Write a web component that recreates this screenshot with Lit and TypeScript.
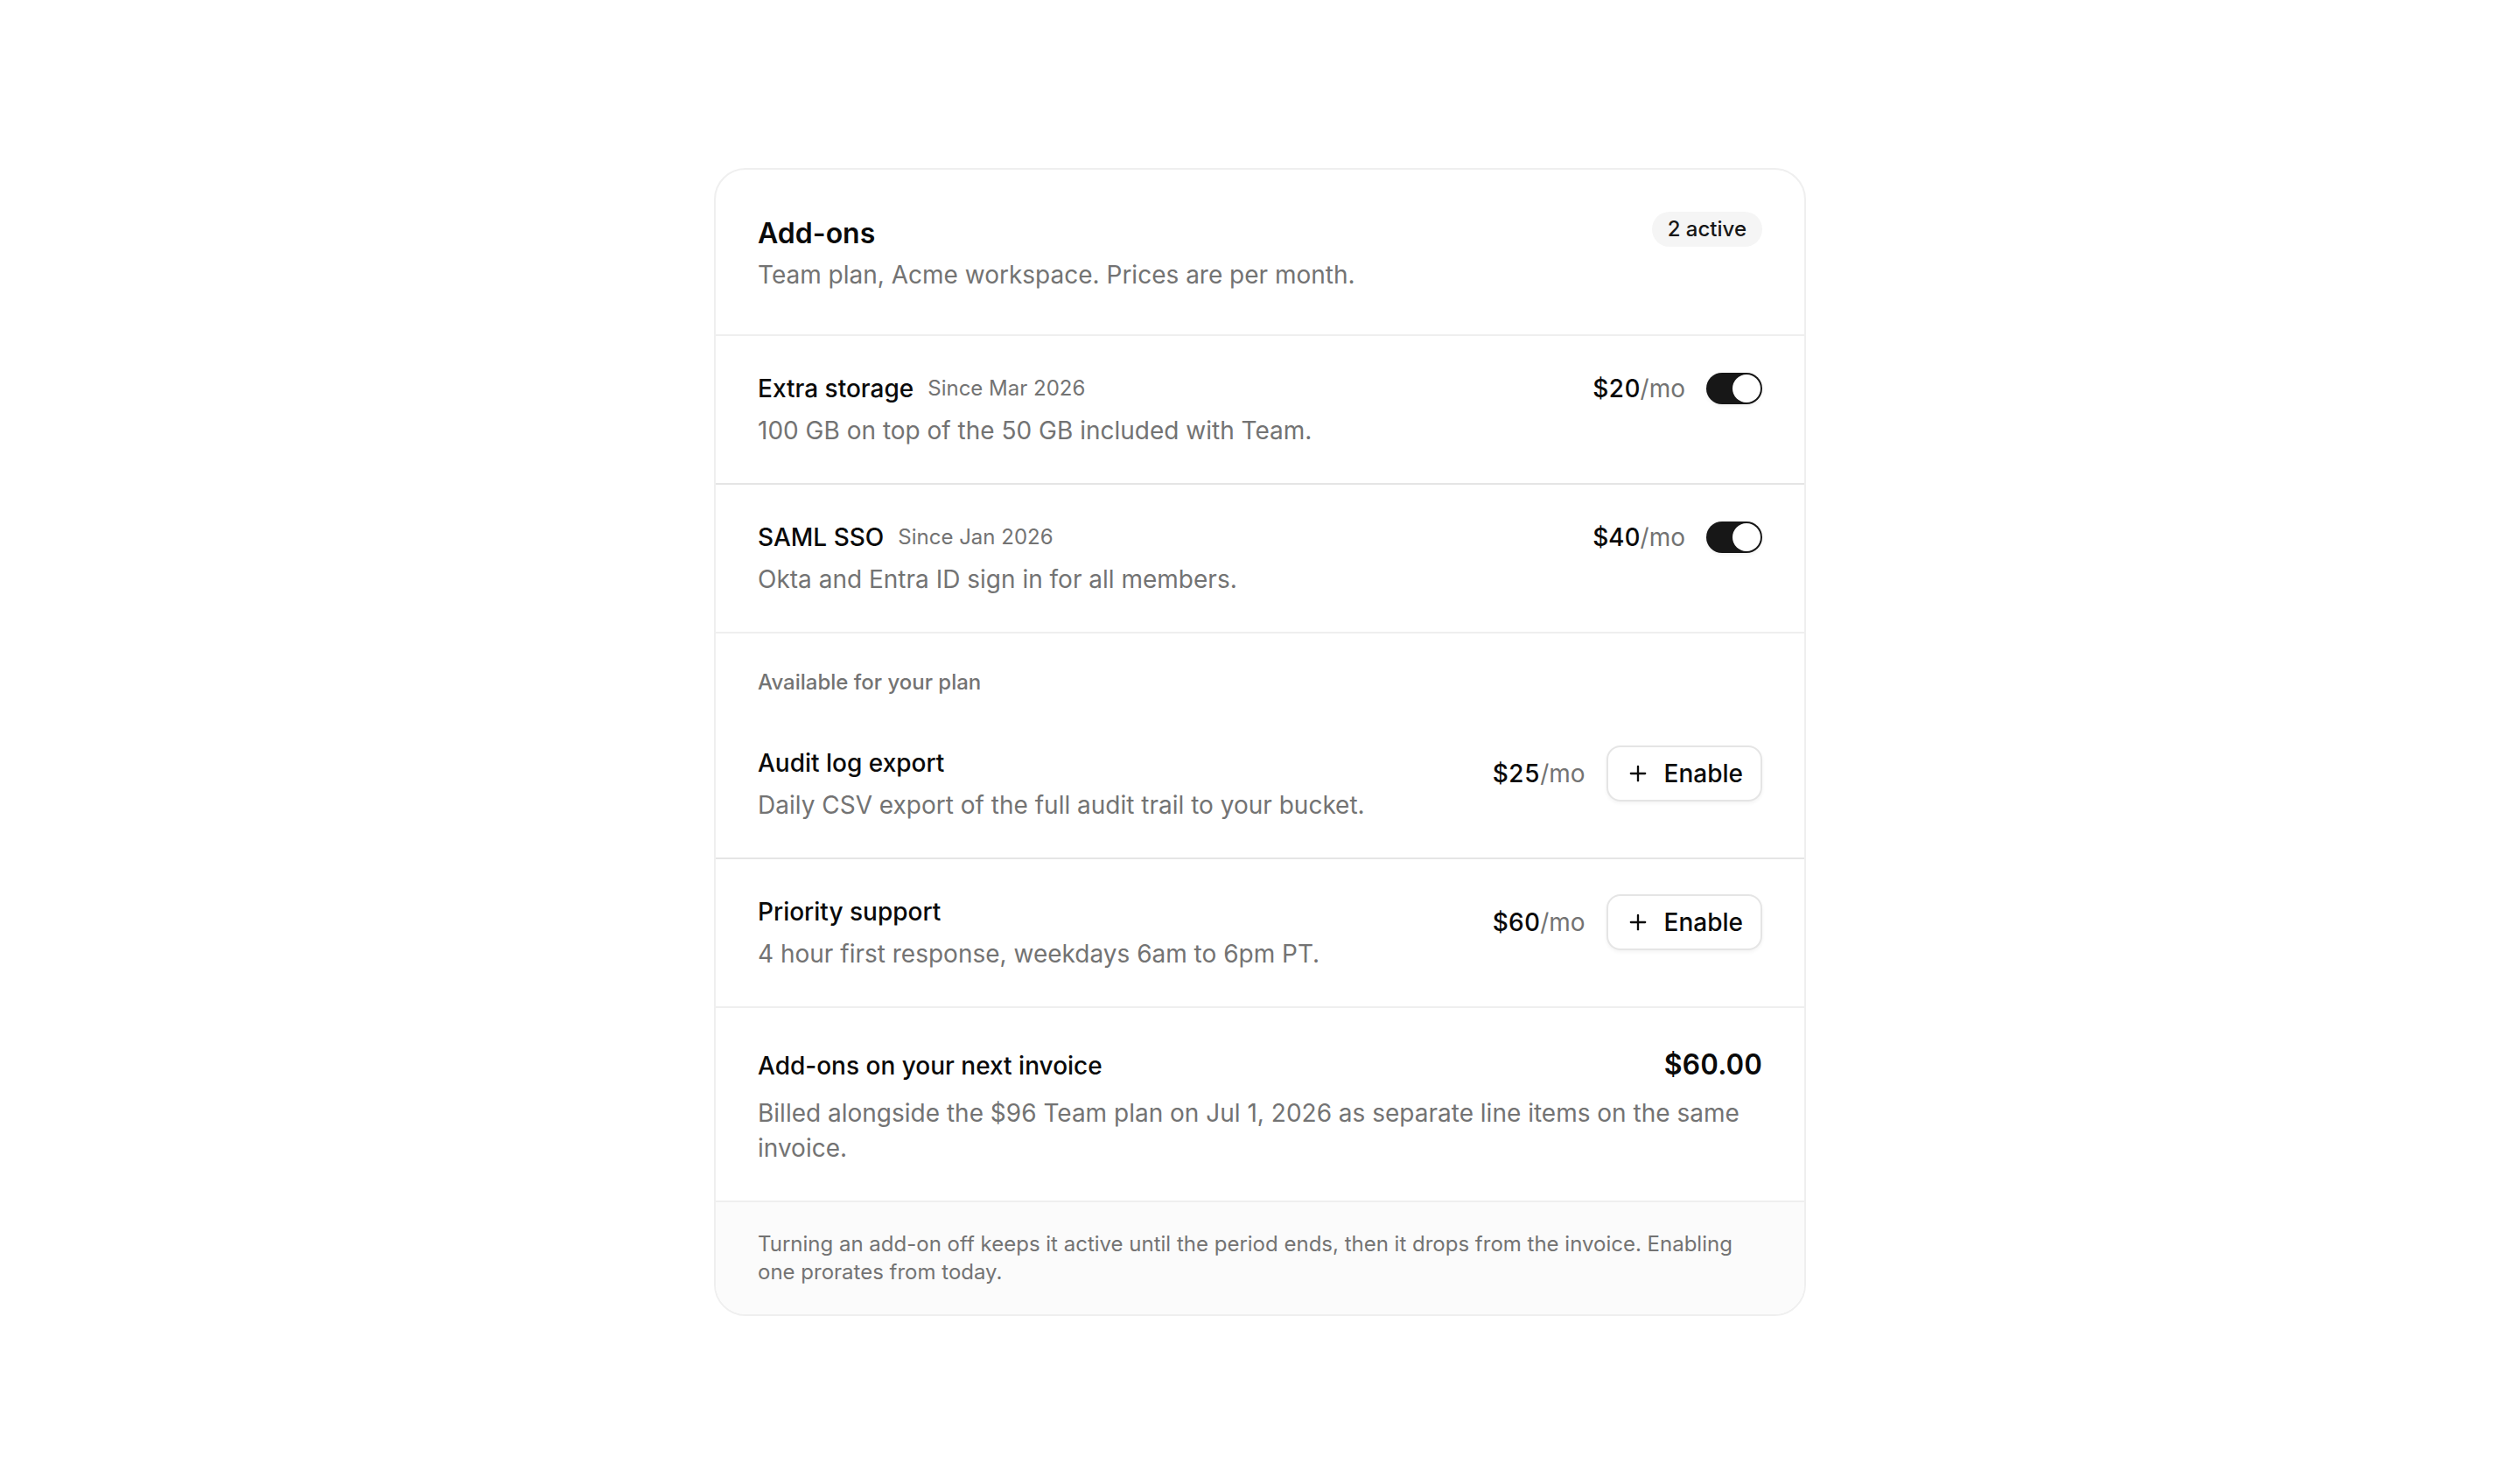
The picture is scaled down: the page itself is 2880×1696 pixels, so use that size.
import { LitElement, html, css, svg, nothing } from "lit";
import { customElement, property, state } from "lit/decorators.js";

interface AddOn {
  id: string;
  name: string;
  detail: string;
  price: number;
  since?: string;
}

const ACTIVE: AddOn[] = [
  {
    id: "storage",
    name: "Extra storage",
    detail: "100 GB on top of the 50 GB included with Team.",
    price: 20,
    since: "Since Mar 2026",
  },
  {
    id: "sso",
    name: "SAML SSO",
    detail: "Okta and Entra ID sign in for all members.",
    price: 40,
    since: "Since Jan 2026",
  },
];

const AVAILABLE: AddOn[] = [
  {
    id: "audit",
    name: "Audit log export",
    detail: "Daily CSV export of the full audit trail to your bucket.",
    price: 25,
  },
  {
    id: "support",
    name: "Priority support",
    detail: "4 hour first response, weekdays 6am to 6pm PT.",
    price: 60,
  },
];

const plusIcon = html`<svg class="plus" viewBox="0 0 24 24" aria-hidden="true">
  ${svg`<path d="M5 12h14"></path><path d="M12 5v14"></path>`}
</svg>`;

@customElement("addon-row")
export class AddonRow extends LitElement {
  @property({ attribute: false }) addon!: AddOn;
  @property({ type: Boolean }) active = false;

  static styles = css`
    :host {
      display: flex;
      align-items: flex-start;
      justify-content: space-between;
      gap: 32px;
      padding: 40px 48px;
    }
    .info {
      min-width: 0;
      display: flex;
      flex-direction: column;
      gap: 8px;
    }
    .heading {
      display: flex;
      flex-wrap: wrap;
      align-items: center;
      column-gap: 16px;
    }
    .name {
      margin: 0;
      font-size: 28px;
      line-height: 40px;
      font-weight: 500;
    }
    .since {
      font-size: 24px;
      line-height: 32px;
      color: var(--muted);
    }
    .detail {
      margin: 0;
      line-height: 40px;
      color: var(--muted);
    }
    .actions {
      flex: none;
      display: flex;
      align-items: center;
      gap: 24px;
    }
    .price {
      line-height: 40px;
      font-weight: 500;
      font-variant-numeric: tabular-nums;
    }
    .unit {
      font-weight: 400;
      color: var(--muted);
    }
    .switch {
      appearance: none;
      box-sizing: border-box;
      display: flex;
      width: 64px;
      height: 36px;
      margin: 2px 0;
      padding: 2px;
      border-radius: 18px;
      background: #e5e5e5;
      box-shadow: 0 2px 4px rgb(0 0 0 / 5%);
      cursor: pointer;
    }
    .switch::before {
      content: "";
      width: 32px;
      height: 32px;
      border-radius: 50%;
      background: #fff;
    }
    .switch:checked {
      justify-content: flex-end;
      background: #171717;
    }
    .enable {
      box-sizing: border-box;
      display: inline-flex;
      align-items: center;
      gap: 16px;
      height: 64px;
      padding: 0 20px;
      border: 2px solid #e5e5e5;
      border-radius: 16px;
      background: #fff;
      box-shadow: 0 2px 4px rgb(0 0 0 / 5%);
      color: inherit;
      font: inherit;
      font-weight: 500;
      line-height: 40px;
      cursor: pointer;
    }
    .plus {
      width: 28px;
      height: 28px;
      fill: none;
      stroke: currentColor;
      stroke-width: 2;
      stroke-linecap: round;
      stroke-linejoin: round;
    }
  `;

  render() {
    const { id, name, detail, price, since } = this.addon;
    return html`
      <div class="info">
        <div class="heading">
          <h3 class="name"><label for=${id}>${name}</label></h3>
          ${since ? html`<span class="since">${since}</span>` : nothing}
        </div>
        <p class="detail">${detail}</p>
      </div>
      <div class="actions">
        <span class="price">$${price}<span class="unit">/mo</span></span>
        ${this.active
          ? html`<input class="switch" id=${id} type="checkbox" role="switch" checked />`
          : html`<button class="enable" id=${id} type="button">${plusIcon}<span>Enable</span></button>`}
      </div>
    `;
  }
}

@customElement("app-root")
export class AppRoot extends LitElement {
  @state() private active = ACTIVE;
  @state() private available = AVAILABLE;

  static styles = css`
    :host {
      --muted: #737373;
      --line: #efefef;
      --line-strong: #e5e5e5;
      box-sizing: border-box;
      display: flex;
      align-items: center;
      justify-content: center;
      min-height: 100vh;
      padding: 48px;
      background: #fff;
      color: #0a0a0a;
      font-family: Inter, "Liberation Sans", sans-serif;
      font-size: 28px;
      line-height: 40px;
    }
    .card {
      box-sizing: border-box;
      width: 100%;
      max-width: 1248px;
      border: 2px solid var(--line);
      border-radius: 36px;
      background: #fff;
    }
    .header {
      display: flex;
      align-items: flex-start;
      justify-content: space-between;
      gap: 32px;
      padding: 48px;
    }
    .titles {
      display: flex;
      flex-direction: column;
      gap: 2px;
    }
    .title {
      margin: 0;
      font-size: 32px;
      line-height: 50px;
      font-weight: 600;
    }
    .text {
      margin: 0;
      color: var(--muted);
    }
    .badge {
      flex: none;
      padding: 4px 18px;
      border-radius: 20px;
      background: #f5f5f5;
      color: #171717;
      font-size: 24px;
      line-height: 32px;
      font-weight: 500;
    }
    .group {
      border-top: 2px solid var(--line);
    }
    .list {
      margin: 0;
      padding: 0;
      list-style: none;
    }
    .item + .item {
      border-top: 2px solid var(--line-strong);
    }
    .label {
      margin: 0;
      padding: 40px 48px 16px;
      font-size: 24px;
      line-height: 32px;
      font-weight: 500;
      color: var(--muted);
    }
    .invoice {
      display: flex;
      flex-direction: column;
      gap: 10px;
      padding: 40px 48px;
      border-top: 2px solid var(--line);
    }
    .total {
      display: flex;
      align-items: baseline;
      justify-content: space-between;
      gap: 32px;
    }
    .total-label {
      margin: 0;
      font-size: 28px;
      line-height: 40px;
      font-weight: 500;
    }
    .amount {
      font-size: 32px;
      line-height: 50px;
      font-weight: 600;
      font-variant-numeric: tabular-nums;
    }
    .footer {
      padding: 32px 48px;
      border-top: 2px solid var(--line);
      border-radius: 0 0 34px 34px;
      background: #fbfbfb;
      color: var(--muted);
      font-size: 24px;
      line-height: 32px;
    }
    .note {
      margin: 0;
    }
  `;

  private list(addons: AddOn[], active: boolean) {
    return html`<ul class="list">
      ${addons.map(
        (addon) => html`<li class="item">
          <addon-row .addon=${addon} ?active=${active}></addon-row>
        </li>`,
      )}
    </ul>`;
  }

  render() {
    const total = this.active.reduce((sum, addon) => sum + addon.price, 0);
    return html`
      <main class="card">
        <header class="header">
          <div class="titles">
            <h1 class="title">Add-ons</h1>
            <p class="text">Team plan, Acme workspace. Prices are per month.</p>
          </div>
          <span class="badge">${this.active.length} active</span>
        </header>
        <section class="group">${this.list(this.active, true)}</section>
        <section class="group">
          <h2 class="label">Available for your plan</h2>
          ${this.list(this.available, false)}
        </section>
        <section class="invoice">
          <div class="total">
            <h2 class="total-label">Add-ons on your next invoice</h2>
            <span class="amount">$${total.toFixed(2)}</span>
          </div>
          <p class="text">
            Billed alongside the $96 Team plan on Jul 1, 2026 as separate line items on the same invoice.
          </p>
        </section>
        <footer class="footer">
          <p class="note">
            Turning an add-on off keeps it active until the period ends, then it drops from the invoice.
            Enabling one prorates from today.
          </p>
        </footer>
      </main>
    `;
  }
}
